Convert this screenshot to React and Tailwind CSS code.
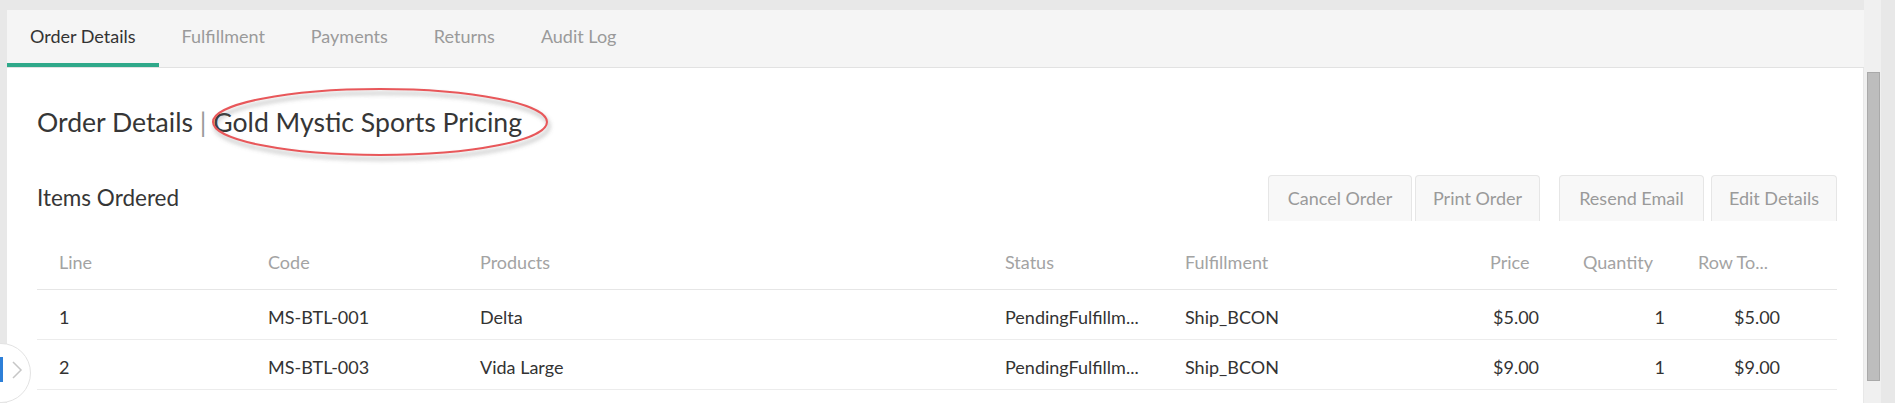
import React from "react";

const tabs = ["Order Details", "Fulfillment", "Payments", "Returns", "Audit Log"];

const rows = [
  { line: "1", code: "MS-BTL-001", product: "Delta", price: "$5.00", qty: "1", total: "$5.00" },
  { line: "2", code: "MS-BTL-003", product: "Vida Large", price: "$9.00", qty: "1", total: "$9.00" },
];

const gridCols = "grid grid-cols-[209px_212px_525px_180px_307px_95px_115px_157px]";

function Row({ r }) {
  return (
    <div className={`${gridCols} h-[50px] items-center border-b border-[#ececec] pt-[6px] text-[18px] text-[#333]`}>
      <div className="pl-[22px]">{r.line}</div>
      <div className="pl-[22px]">{r.code}</div>
      <div className="pl-[22px]">{r.product}</div>
      <div className="pl-[22px] whitespace-nowrap">PendingFulfillm...</div>
      <div className="pl-[22px]">Ship_BCON</div>
      <div className="pl-[23px]">{r.price}</div>
      <div className="pr-[15px] text-right">{r.qty}</div>
      <div className="pl-[54px]">{r.total}</div>
    </div>
  );
}

export default function App() {
  return (
    <div className="relative flex h-[403px] w-[1895px] overflow-hidden bg-[#e8e8e8] font-[Lato,sans-serif]">
      {/* main column */}
      <div className="ml-[7px] flex w-[1857px] flex-col pt-[10px]">
        {/* tab bar */}
        <div className="flex h-[58px] border-b border-[#e2e2e2] bg-[#f5f5f5]">
          {tabs.map((t, i) => (
            <div
              key={t}
              className={
                i === 0
                  ? "flex items-center border-b-[4px] border-[#2fa98a] px-[23px] text-[18px] text-[#333]"
                  : "flex items-center border-b-[4px] border-transparent px-[23px] text-[18px] text-[#9a9a9a]"
              }
            >
              {t}
            </div>
          ))}
        </div>

        {/* panel */}
        <div className="relative mr-[1px] flex-1 bg-white pl-[30px] pr-[26px] pt-[38px]">
          <div className="text-[26.6px] leading-[32px] text-[#363636]">
            Order Details <span className="text-[#9a9a9a]">|</span> Gold Mystic Sports Pricing
          </div>

          {/* annotation ellipse */}
          <svg className="pointer-events-none absolute left-[193px] top-[16px]" width="360" height="90" viewBox="0 0 360 90">
            <defs>
              <filter id="sh" x="-10%" y="-30%" width="120%" height="160%">
                <feGaussianBlur stdDeviation="2" />
              </filter>
            </defs>
            <ellipse cx="182" cy="42" rx="167" ry="33" fill="none" stroke="#6b6b6b" strokeOpacity="0.45" strokeWidth="2.5" filter="url(#sh)" />
            <ellipse cx="180" cy="38" rx="167" ry="33" fill="none" stroke="#e8575a" strokeWidth="2" />
          </svg>

          <div className="mt-[37px] flex h-[46px] items-center justify-between">
            <div className="text-[22.5px] text-[#363636]">Items Ordered</div>
            <div className="flex h-full text-[18px] text-[#9a9a9a]">
              <div className="flex w-[144px] items-center justify-center rounded-t-[4px] border border-b-0 border-[#e6e6e6] bg-[#f8f8f8]">Cancel Order</div>
              <div className="ml-[3px] flex w-[125px] items-center justify-center rounded-t-[4px] border border-b-0 border-[#e6e6e6] bg-[#f8f8f8]">Print Order</div>
              <div className="ml-[19px] flex w-[145px] items-center justify-center rounded-t-[4px] border border-b-0 border-[#e6e6e6] bg-[#f8f8f8]">Resend Email</div>
              <div className="ml-[7px] flex w-[126px] items-center justify-center rounded-t-[4px] border border-b-0 border-[#e6e6e6] bg-[#f8f8f8]">Edit Details</div>
            </div>
          </div>

          {/* table */}
          <div className="mt-[14px] w-[1800px]">
            <div className={`${gridCols} h-[55px] items-center border-b border-[#e6e6e6] text-[18px] text-[#a3a3a3]`}>
              <div className="pl-[22px]">Line</div>
              <div className="pl-[22px]">Code</div>
              <div className="pl-[22px]">Products</div>
              <div className="pl-[22px]">Status</div>
              <div className="pl-[22px]">Fulfillment</div>
              <div className="pl-[20px]">Price</div>
              <div className="pl-[18px]">Quantity</div>
              <div className="pl-[18px]">Row To...</div>
            </div>
            {rows.map((r) => (
              <Row key={r.line} r={r} />
            ))}
          </div>
        </div>
      </div>

      {/* scrollbar */}
      <div className="w-[17px] bg-[#f0f0f0] pt-[72px]">
        <div className="ml-[3px] h-[309px] w-[13px] border border-[#a9a9a9] bg-[#bdbdbd]" />
      </div>

      {/* sidebar toggle */}
      <div className="absolute left-[-29px] top-[343px] h-[60px] w-[60px] rounded-full border border-[#e3e3e3] bg-white" />
      <div className="absolute left-0 top-[357px] h-[25px] w-[3px] bg-[#2d7fd8]" />
      <svg className="absolute left-[11px] top-[361px]" width="12" height="18" viewBox="0 0 12 18">
        <polyline points="2,1 10,9 2,17" fill="none" stroke="#c6c6c6" strokeWidth="1.5" />
      </svg>
    </div>
  );
}
